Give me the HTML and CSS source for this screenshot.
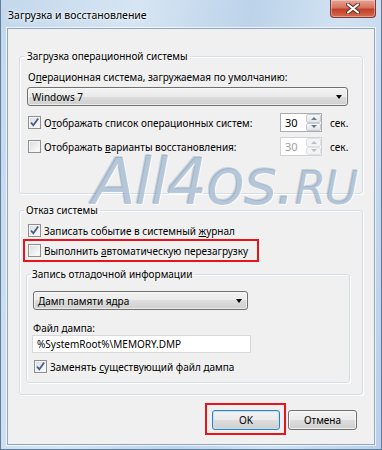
FILE: index.html
```html
<!DOCTYPE html>
<html lang="ru">
  <head>
    <meta charset="UTF-8" />
    <meta name="viewport" content="width=device-width, initial-scale=1.0" />
    <title>Загрузка и восстановление</title>
    <link rel="stylesheet" href="styles.css">
  </head>
  <body>
    <div class="window">
      <div class="titlebar">
        <span class="title">Загрузка и восстановление</span>
        <div class="close">
          <svg width="14" height="11" viewBox="0 0 14 11">
            <path d="M2 1.5 L12 9.5 M12 1.5 L2 9.5" stroke="#5a2a2a" stroke-width="4" stroke-linecap="round" />
            <path d="M2 1.5 L12 9.5 M12 1.5 L2 9.5" stroke="#ffffff" stroke-width="2.2" stroke-linecap="round" />
          </svg>
        </div>
      </div>

      <div class="client">
        <fieldset class="group boot">
          <legend>Загрузка операционной системы</legend>
          <div class="label">О<u>п</u>ерационная система, загружаемая по умолчанию:</div>
          <div class="select os-select">
            <span>Windows 7</span>
            <span class="arrow"></span>
          </div>

          <div class="row">
            <span class="check on">
              <svg width="11" height="11" viewBox="0 0 11 11"><path d="M2 5.5 L4.3 8.3 L9.2 1.5" fill="none" stroke="#4a5d8a" stroke-width="1.8" /></svg>
            </span>
            <span class="row-text">О<u>т</u>ображать список операционных систем:</span>
            <span class="spin">
              <span class="spin-value">30</span>
              <span class="spin-btns"><span class="up"></span><span class="down"></span></span>
            </span>
            <span class="sec">сек.</span>
          </div>

          <div class="row">
            <span class="check"></span>
            <span class="row-text">Отображать <u>в</u>арианты восстановления:</span>
            <span class="spin disabled">
              <span class="spin-value">30</span>
              <span class="spin-btns"><span class="up"></span><span class="down"></span></span>
            </span>
            <span class="sec">сек.</span>
          </div>
        </fieldset>

        <fieldset class="group failure">
          <legend>Отказ системы</legend>
          <div class="row">
            <span class="check on">
              <svg width="11" height="11" viewBox="0 0 11 11"><path d="M2 5.5 L4.3 8.3 L9.2 1.5" fill="none" stroke="#4a5d8a" stroke-width="1.8" /></svg>
            </span>
            <span class="row-text">Записать событие в системный <u>ж</u>урнал</span>
          </div>
          <div class="row marked">
            <span class="check"></span>
            <span class="row-text">Выполнить <u>а</u>втоматическую перезагрузку</span>
          </div>

          <fieldset class="group debug">
            <legend>Запись отладочной информации</legend>
            <div class="select dump-select">
              <span>Дамп памяти ядра</span>
              <span class="arrow"></span>
            </div>
            <div class="label dump-label">Файл дампа:</div>
            <div class="textbox">%SystemRoot%\MEMORY.DMP</div>
            <div class="row">
              <span class="check on">
                <svg width="11" height="11" viewBox="0 0 11 11"><path d="M2 5.5 L4.3 8.3 L9.2 1.5" fill="none" stroke="#4a5d8a" stroke-width="1.8" /></svg>
              </span>
              <span class="row-text">Заменять <u>с</u>уществующий файл дампа</span>
            </div>
          </fieldset>
        </fieldset>

        <div class="buttons">
          <div class="ok-frame"><button class="btn default">OK</button></div>
          <button class="btn cancel">Отмена</button>
        </div>
      </div>

      <div class="watermark">All4os.<span class="small">RU</span></div>
    </div>
  </body>
</html>
```

FILE: styles.css
```css
* {
  box-sizing: border-box;
}

body {
  margin: 0;
  font-family: "Noto Sans", sans-serif;
  font-size: 10px;
  color: #000;
}

.window {
  position: relative;
  width: 382px;
  height: 450px;
  display: flex;
  flex-direction: column;
  padding-bottom: 4px;
  border: 1px solid #5f7d9c;
  border-top: none;
  background: linear-gradient(100deg, #c3d8ec 0%, #d6e5f3 30%, #bcd3ea 55%, #d2e2f2 75%, #b9d0e8 100%);
}

.titlebar {
  height: 28px;
  display: flex;
  justify-content: space-between;
  align-items: flex-start;
  padding: 0 5px 0 7px;
}

.title {
  margin-top: 7px;
  font-size: 10.5px;
  line-height: 16px;
  text-shadow: 0 0 6px #fff, 0 0 3px #fff;
}

.close {
  width: 46px;
  height: 18px;
  display: flex;
  align-items: center;
  justify-content: center;
  border: 1px solid #7a3b35;
  border-top: none;
  border-radius: 0 0 4px 4px;
  background: linear-gradient(#e8a596 0%, #d6735f 45%, #c2402a 55%, #d56a4a 100%);
  box-shadow: inset 0 0 0 1px rgba(255, 255, 255, 0.35);
}

.client {
  flex: 1;
  margin: 0 6px;
  padding: 0 11px;
  border: 1px solid #8ea6bf;
  background: #f0f0f0;
  box-shadow: 0 0 0 1px rgba(255, 255, 255, 0.7);
}

.group {
  margin: 0;
  min-width: 0;
  border: 1px solid #d5dfe5;
  border-radius: 3px;
  box-shadow: 1px 1px 0 #fff, inset 1px 1px 0 #fff;
}

.group legend {
  padding: 0 2px;
  margin-left: -2px;
  line-height: 16px;
}

.boot {
  margin-top: 19px;
  padding: 5px 7px 37px 7px;
}

.failure {
  margin-top: 8px;
  padding: 3px 0 11px 6px;
}

.debug {
  margin: 4px 12px 0 0;
  padding: 9px 6px 6px 6px;
}

.debug legend {
  margin-left: -3px;
}

.label {
  line-height: 16px;
  padding-left: 1px;
}

.select {
  height: 19px;
  display: flex;
  align-items: center;
  justify-content: space-between;
  padding: 0 5px 0 4px;
  border: 1px solid #707070;
  border-radius: 3px;
  background: linear-gradient(#f2f2f2 0%, #ebebeb 50%, #dddddd 50%, #cfcfcf 100%);
  box-shadow: inset 0 0 0 1px rgba(255, 255, 255, 0.6);
}

.os-select {
  width: 321px;
  margin-top: 2px;
}

.dump-select {
  width: 215px;
}

.arrow {
  width: 0;
  height: 0;
  border-left: 3.5px solid transparent;
  border-right: 3.5px solid transparent;
  border-top: 4px solid #000;
}

.row {
  display: flex;
  align-items: center;
  height: 19px;
  padding-left: 1px;
}

.boot .row {
  margin-top: 7px;
}

.boot .row + .row {
  margin-top: 5px;
}

.failure > .row {
  padding-left: 2px;
}

.failure > .row.marked {
  width: 236px;
  height: 23px;
  margin: -1px 0 0 -3px;
  padding-left: 3px;
  border: 2px solid #e8141c;
}

.check {
  width: 13px;
  height: 13px;
  flex: none;
  display: flex;
  align-items: center;
  justify-content: center;
  border: 1px solid #8e8f8f;
  background: linear-gradient(135deg, #d8dbe0 0%, #f4f4f4 70%, #ffffff 100%);
  box-shadow: inset 0 0 0 1px #f4f4f4;
}

.row-text {
  margin-left: 3px;
  line-height: 16px;
  white-space: nowrap;
}

.spin {
  margin-left: auto;
  width: 42px;
  height: 19px;
  display: flex;
  border: 1px solid #abadb3;
  background: #fff;
}

.spin-value {
  flex: 1;
  padding-left: 4px;
  font-size: 11px;
  line-height: 17px;
}

.spin-btns {
  width: 15px;
  display: flex;
  flex-direction: column;
}

.spin-btns span {
  flex: 1;
  display: flex;
  align-items: center;
  justify-content: center;
  border: 1px solid #c8cbd0;
  border-radius: 2px;
  background: linear-gradient(#f6f7f8, #e1e4e8);
}

.spin-btns .up::after {
  content: "";
  border-left: 3px solid transparent;
  border-right: 3px solid transparent;
  border-bottom: 3px solid #6a7a90;
}

.spin-btns .down::after {
  content: "";
  border-left: 3px solid transparent;
  border-right: 3px solid transparent;
  border-top: 3px solid #6a7a90;
}

.spin.disabled {
  border-color: #d0d2d6;
  color: #a0a0a0;
}

.spin.disabled .spin-btns span {
  border-color: #dfe1e4;
  background: #f4f4f4;
}

.spin.disabled .spin-btns span::after {
  border-top-color: #b8c0ca;
  border-bottom-color: #b8c0ca;
}

.sec {
  width: 25px;
  margin-left: 8px;
  flex: none;
}

.dump-label {
  margin-top: 11px;
  line-height: 14px;
  padding-left: 0;
}

.textbox {
  width: 219px;
  height: 18px;
  margin-left: -1px;
  padding-left: 4px;
  line-height: 16px;
  border: 1px solid #d8d8d8;
  background: #fff;
}

.debug .row {
  margin-top: 4px;
}

.buttons {
  display: flex;
  justify-content: flex-end;
  align-items: flex-start;
  gap: 2px;
  margin: 8px 6px 0 0;
}

.ok-frame {
  padding: 5px 4px 3px 5px;
  border: 2px solid #e8141c;
}

.btn {
  width: 68px;
  height: 20px;
  padding: 0;
  font-family: "Noto Sans", sans-serif;
  font-size: 10px;
  border: 1px solid #707070;
  border-radius: 3px;
  background: linear-gradient(#f2f2f2 0%, #ebebeb 50%, #dddddd 50%, #cfcfcf 100%);
  box-shadow: inset 0 0 0 1px rgba(255, 255, 255, 0.7);
}

.btn.default {
  border-color: #3c7fb1;
  box-shadow: inset 0 0 0 1px #b7e3f7;
}

.btn.cancel {
  width: 69px;
  margin-top: 7px;
}

.watermark {
  position: absolute;
  left: 91px;
  top: 154px;
  font-family: "DejaVu Sans", sans-serif;
  font-style: italic;
  font-size: 64px;
  line-height: 56px;
  letter-spacing: -1.5px;
  color: rgba(120, 153, 188, 0.5);
  text-shadow: 1px 1px 0 rgba(255, 255, 255, 0.7), -1px -1px 0 rgba(90, 120, 155, 0.25);
  pointer-events: none;
}

.watermark .small {
  font-size: 46px;
}
```
